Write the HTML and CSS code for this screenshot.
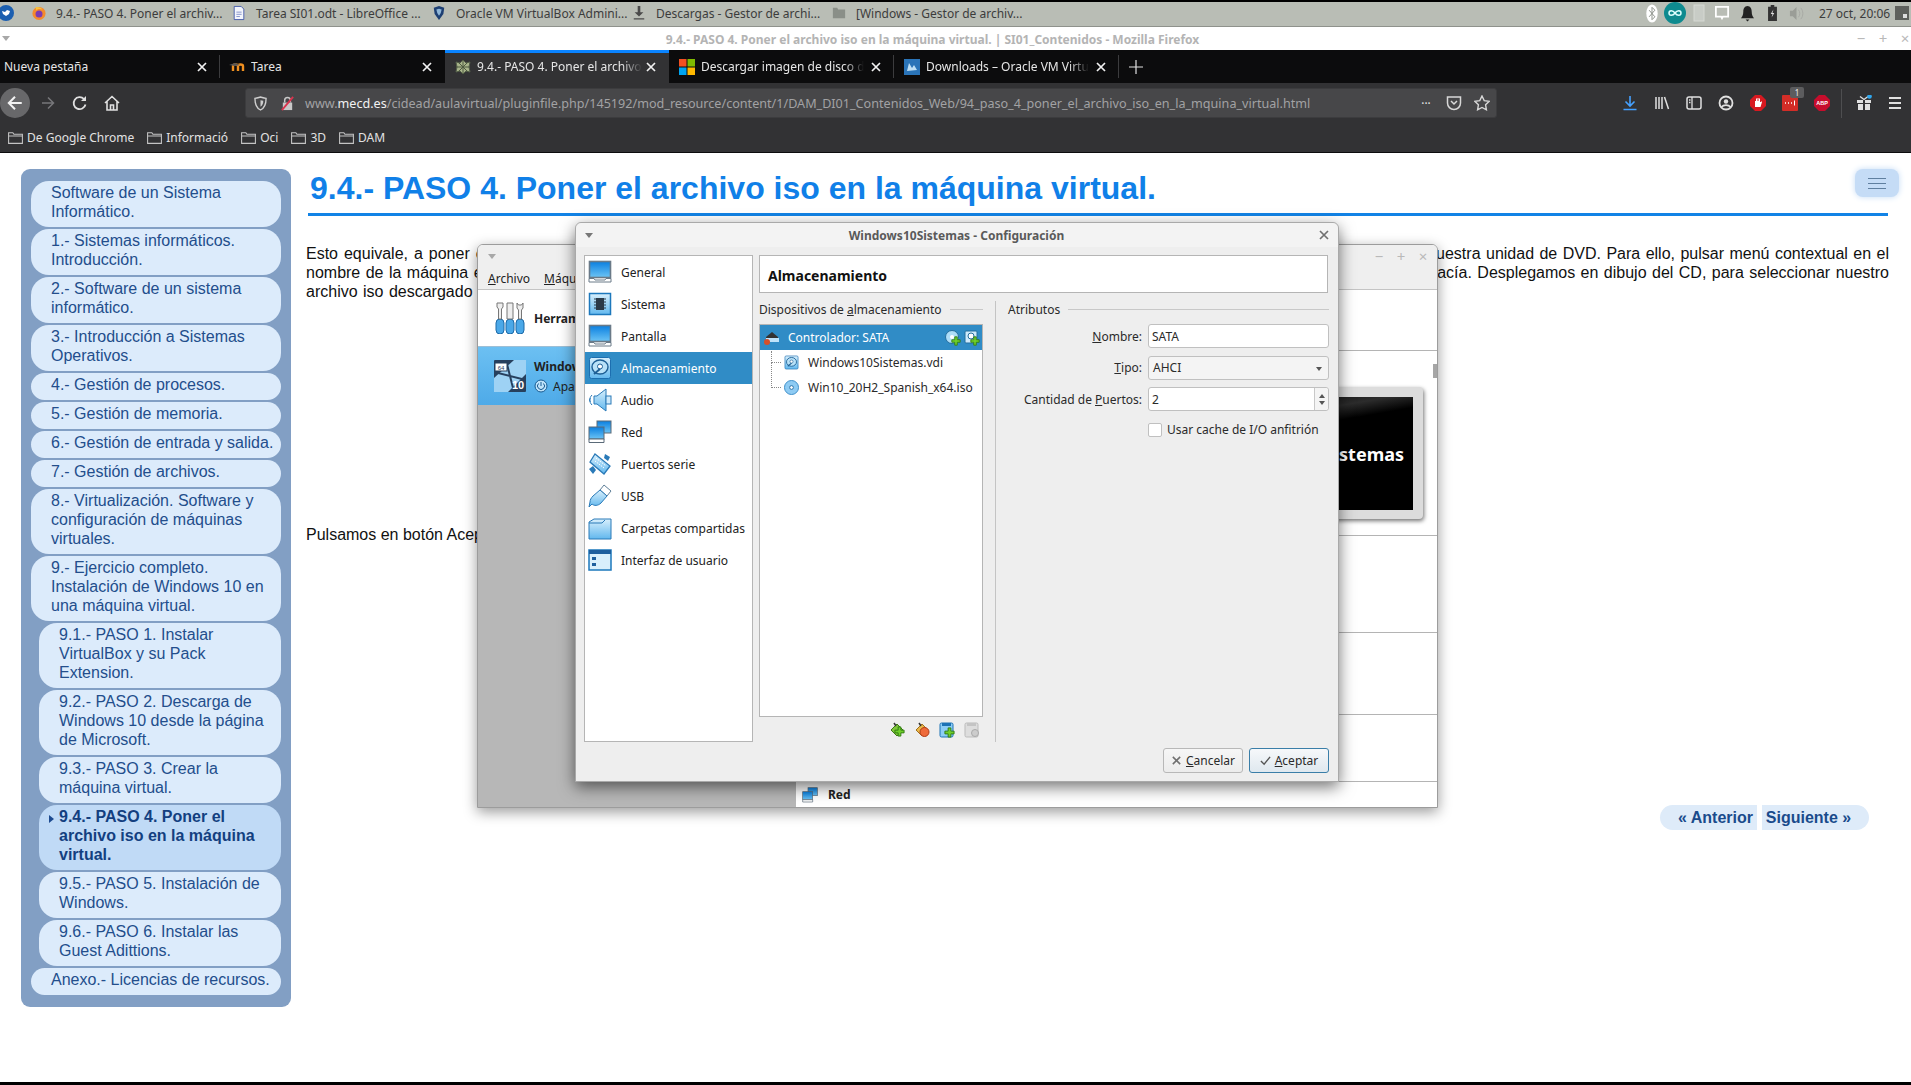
FILE: index.html
```html
<!doctype html>
<html lang="es">
  <head>
    <meta charset="UTF-8" />
    <title>9.4.- PASO 4. Poner el archivo iso en la máquina virtual.</title>
    <link rel="stylesheet" href="styles.css">
  </head>
  <body>
    <svg class="defs" aria-hidden="true">
      <defs>
        <linearGradient id="blue" x1="0" y1="0" x2="0" y2="1">
          <stop offset="0" stop-color="#0a7fe0" />
          <stop offset="1" stop-color="#6cc4f5" />
        </linearGradient>
        <linearGradient id="pale" x1="0" y1="0" x2="0" y2="1">
          <stop offset="0" stop-color="#d8effc" />
          <stop offset="1" stop-color="#62b8ee" />
        </linearGradient>
      </defs>
      <symbol id="folder" viewBox="0 0 16 14">
        <path d="M1.5 2.5h4l1 1.5h8v8.5h-13z M1.5 5.5h13" fill="none" stroke="currentColor" />
      </symbol>
      <symbol id="close" viewBox="0 0 12 12">
        <path d="M2 2l8 8M10 2l-8 8" fill="none" stroke="currentColor" stroke-width="1.7" />
      </symbol>
      <symbol id="screen" viewBox="0 0 24 24">
        <rect x="1.5" y="1.5" width="21" height="16" fill="url(#blue)" stroke="#6a7a88" stroke-width="1.6" />
        <path d="M1 22v-3.500h5l1 1.500h10l1-1.500h5V22z" fill="#fff" stroke="#6a7a88" />
      </symbol>
      <symbol id="plus" viewBox="0 0 12 12">
        <path d="M4.500 1h3v3.500H11v3H7.500V11h-3V7.500H1v-3h3.500z" fill="#6fcf2a" stroke="#2e7a10" />
      </symbol>
      <symbol id="disk" viewBox="0 0 24 24">
        <rect x="1.500" y="1.500" width="21" height="21" rx="2" fill="url(#pale)" stroke="#1d6fb0" />
        <ellipse cx="12" cy="11" rx="8" ry="7" fill="#b9e2f8" stroke="#1d5f95" stroke-width="1.400" />
        <circle cx="12" cy="10.500" r="2.500" fill="#fff" stroke="#1d5f95" />
        <path d="M6 18l6-5" stroke="#1d5f95" stroke-width="2" />
      </symbol>
      <symbol id="net" viewBox="0 0 24 24">
        <rect x="9" y="1" width="14" height="12" fill="url(#blue)" stroke="#5a6a78" />
        <rect x="1" y="7" width="15" height="12" fill="url(#blue)" stroke="#5a6a78" />
        <path d="M1 19h15v3.500H1z" fill="#fff" stroke="#5a6a78" />
      </symbol>
    </svg>

    <header class="panel">
      <svg class="menu-logo" viewBox="0 0 16 16"><circle cx="7" cy="8" r="8" fill="#1c5fb0" /><path d="M3 6l3 1 2-2 3 1-1 3-3 2-3-2z" fill="#fff" /></svg>
      <div class="task">
        <svg class="task-icon" viewBox="0 0 16 16"><circle cx="8" cy="8.500" r="7.500" fill="#f58a2c" /><circle cx="8" cy="9" r="4" fill="#7d3bb0" /><path d="M4 1c2 0 6 0 8 3-3-1-5-1-7 1z" fill="#f7c23c" /></svg>
        <span>9.4.- PASO 4. Poner el archiv...</span>
      </div>
      <div class="task">
        <svg class="task-icon" viewBox="0 0 16 16"><path d="M2.500.5h8l3 3v12h-11z" fill="#f3f5fb" stroke="#3e55a8" /><path d="M5 7h6M5 9.500h6M5 12h4" stroke="#7d8cc8" /></svg>
        <span>Tarea SI01.odt - LibreOffice ...</span>
      </div>
      <div class="task">
        <svg class="task-icon" viewBox="0 0 16 16"><path d="M2 2l6-2 6 2-1 7-5 7-5-7z" fill="#1d3f73" /><path d="M5 4l3-1 3 1-1 4-2 3-2-3z" fill="#8fb6d8" /></svg>
        <span>Oracle VM VirtualBox Admini...</span>
      </div>
      <div class="task">
        <svg class="task-icon" viewBox="0 0 16 16"><path d="M6.500 0h3v7H13l-5 5-5-5h3.500zM2 14h12v1.500H2z" fill="#4a4a4a" /></svg>
        <span>Descargas - Gestor de archi...</span>
      </div>
      <div class="task">
        <svg class="task-icon" viewBox="0 0 16 16"><path d="M1 2h5l1 2h8v10H1z" fill="#8a8f88" /></svg>
        <span>[Windows - Gestor de archiv...</span>
      </div>
      <div class="tray">
        <svg class="tray-bt" viewBox="0 0 12 20"><ellipse cx="6" cy="10" rx="6" ry="9.500" fill="#fff" /><path d="M3 6.500l6 7-3 3v-13l3 3-6 7" fill="none" stroke="#8a8f88" /></svg>
        <svg class="tray-ard" viewBox="0 0 22 22"><circle cx="11" cy="11" r="11" fill="#0e8a8f" /><path d="M11 11c-2-3-6-3-6 0s4 3 6 0c2-3 6-3 6 0s-4 3-6 0z" fill="none" stroke="#dff" stroke-width="1.500" /></svg>
        <svg class="tray-k" viewBox="0 0 12 18"><rect x="1" y="1" width="10" height="16" fill="#c8ccc6" stroke="#d6d9d3" /></svg>
        <svg class="tray-sq" viewBox="0 0 16 16"><path d="M1 1h14v11H9l-1 2-1-2H1z" fill="none" stroke="#fff" stroke-width="2" /></svg>
        <svg class="tray-bell" viewBox="0 0 16 18"><path d="M8 1c3 0 4.500 3 4.500 6s1 5 2.500 7H1c1.500-2 2.500-4 2.500-7S5 1 8 1zM6 15.500h4L8 17.500z" fill="#222" /></svg>
        <svg class="tray-bat" viewBox="0 0 12 18"><path d="M4 0h4v2h3v16H1V2h3z" fill="#333" /><path d="M7 5L4 10h2l-1 4 3-5H6z" fill="#ddd" /></svg>
        <svg class="tray-vol" viewBox="0 0 16 16"><path d="M1 5h3l4-4v14l-4-4H1z" fill="#9a9d97" /><path d="M10 4c2 2 2 6 0 8M12.500 2c3 3 3 9 0 12" fill="none" stroke="#a6a9a3" /></svg>
        <span class="clock">27 oct, 20:06</span>
        <svg class="tray-desk" viewBox="0 0 14 14"><rect width="14" height="14" fill="#5e605c" /><rect x="8" y="8" width="4" height="4" fill="#ddd" /></svg>
      </div>
    </header>

    <div class="titlebar">
      <span class="drop"></span>
      <span class="title">9.4.- PASO 4. Poner el archivo iso en la máquina virtual. | SI01_Contenidos - Mozilla Firefox</span>
      <span class="winbtns"><b>−</b><b>+</b><b>×</b></span>
    </div>

    <nav class="tabs">
      <div class="tab tab-first"><span class="tab-text">Nueva pestaña</span><svg class="tab-x"><use href="#close" /></svg></div>
      <div class="tab tab-two">
        <svg class="tab-icon" viewBox="0 0 16 16"><path d="M1 12V7c0-2 5-2 5 0v5M6 12V7c0-2 5-2 5 0v5" transform="translate(3 0)" fill="none" stroke="#f09020" stroke-width="2.400" /><path d="M0 6l6-2 5 2-5 1z" fill="#555" /></svg>
        <span class="tab-text">Tarea</span><svg class="tab-x"><use href="#close" /></svg>
      </div>
      <div class="tab tab-active">
        <svg class="tab-icon" viewBox="0 0 16 16"><path d="M8 1l3 3 4-1-1 5 1 5-4-1-3 3-3-3-4 1 1-5-1-5 4 1z" fill="#a8b48a" stroke="#55604a" /><path d="M3 3l10 10M13 3L3 13M8 1v14M1 8h14" stroke="#4e5a40" /></svg>
        <span class="tab-text fade">9.4.- PASO 4. Poner el archivo</span><svg class="tab-x"><use href="#close" /></svg>
      </div>
      <div class="tab tab-sep">
        <svg class="tab-icon" viewBox="0 0 16 16"><rect width="7.500" height="7.500" fill="#f25022" /><rect x="8.500" width="7.500" height="7.500" fill="#7fba00" /><rect y="8.500" width="7.500" height="7.500" fill="#00a4ef" /><rect x="8.500" y="8.500" width="7.500" height="7.500" fill="#ffb900" /></svg>
        <span class="tab-text fade">Descargar imagen de disco d</span><svg class="tab-x"><use href="#close" /></svg>
      </div>
      <div class="tab tab-sep">
        <svg class="tab-icon" viewBox="0 0 16 16"><rect width="16" height="16" fill="#2a74b8" /><path d="M3 12l2-8 3 5 2-3 3 5z" fill="#bfe0f5" /></svg>
        <span class="tab-text fade">Downloads – Oracle VM Virtu</span><svg class="tab-x"><use href="#close" /></svg>
      </div>
      <svg class="tab-new" viewBox="0 0 14 14"><path d="M7 0v14M0 7h14" stroke="#e2e2e2" stroke-width="1.200" /></svg>
    </nav>

    <div class="toolbar">
      <span class="back"><svg viewBox="0 0 16 16"><path d="M14 8H2.500M8 2.500L2.500 8 8 13.500" fill="none" stroke="#f2f2f2" stroke-width="1.800" /></svg></span>
      <span class="slot dim"><svg viewBox="0 0 16 16"><path d="M2 8h11.500M8 2.500L13.500 8 8 13.500" fill="none" stroke="currentColor" stroke-width="1.500" /></svg></span>
      <span class="slot"><svg viewBox="0 0 16 16"><path d="M13.500 9.500A6 6 0 1 1 12 4" fill="none" stroke="currentColor" stroke-width="1.800" /><path d="M14 1v5H9z" fill="currentColor" /></svg></span>
      <span class="slot"><svg viewBox="0 0 16 16"><path d="M1 8l7-6.500L15 8M3 6.500V15h10V6.500M6.500 15v-5h3v5" fill="none" stroke="currentColor" stroke-width="1.600" /></svg></span>
      <div class="urlbar">
        <svg class="url-shield" viewBox="0 0 14 16"><path d="M1 2.500C4 2 5 1.500 7 1c2 .5 3 1 6 1.500 0 6-1 10-6 12.500C2 12.500 1 8.500 1 2.500z" fill="none" stroke="#cfcfcf" stroke-width="1.500" /><path d="M7 4.500v7c2.500-1.500 3-4 3-6.500z" fill="#cfcfcf" /></svg>
        <svg class="url-lock" viewBox="0 0 16 16"><path d="M3 7h10v8H3z" fill="#c8c8c8" /><path d="M5 7V4.500a3 3 0 0 1 6 0V7" fill="none" stroke="#c8c8c8" stroke-width="1.600" /><path d="M2 15L14 1" stroke="#d8344e" stroke-width="2" /></svg>
        <span class="url"><span>www.</span><b>mecd.es</b><span>/cidead/aulavirtual/pluginfile.php/145192/mod_resource/content/1/DAM_DI01_Contenidos_Web/94_paso_4_poner_el_archivo_iso_en_la_mquina_virtual.html</span></span>
        <span class="url-dots">•••</span>
        <svg class="url-pocket" viewBox="0 0 16 16"><path d="M1.500 2h13v6a6.500 6.500 0 0 1-13 0z" fill="none" stroke="#d8d8d8" stroke-width="1.500" /><path d="M5 6l3 3 3-3" fill="none" stroke="#d8d8d8" stroke-width="1.500" /></svg>
        <svg class="url-star" viewBox="0 0 16 16"><path d="M8 1l2.200 4.600 5 .7-3.600 3.500.8 5L8 12.500l-4.400 2.300.8-5L.8 6.300l5-.7z" fill="none" stroke="#d8d8d8" stroke-width="1.400" /></svg>
      </div>
      <span class="slot slot-first blue"><svg viewBox="0 0 16 16"><path d="M8 1v10M3.500 6.500L8 11l4.500-4.500M1.500 14.500h13" fill="none" stroke="currentColor" stroke-width="1.600" /></svg></span>
      <span class="slot"><svg viewBox="0 0 16 16"><path d="M2 2v12M5 2v12M8 2v12M10.500 2l4 12" fill="none" stroke="currentColor" stroke-width="1.500" /></svg></span>
      <span class="slot"><svg viewBox="0 0 16 16"><rect x="1" y="2" width="14" height="12" rx="2" fill="none" stroke="currentColor" stroke-width="1.500" /><path d="M6 2v12M3 5h1.500M3 7.500h1.500" stroke="currentColor" stroke-width="1.300" /></svg></span>
      <span class="slot"><svg viewBox="0 0 16 16"><circle cx="8" cy="8" r="6.500" fill="none" stroke="currentColor" stroke-width="1.800" /><circle cx="8" cy="6.500" r="2.200" fill="currentColor" /><path d="M3.500 12c2-2.500 7-2.500 9 0" fill="none" stroke="currentColor" stroke-width="1.800" /></svg></span>
      <span class="slot"><svg viewBox="0 0 16 16"><path d="M5 0h6l5 5v6l-5 5H5l-5-5V5z" fill="#d71920" /><path d="M5 12V6h1V3.500h1V6h.500V3h1v3H9V3.500h1V7h1V6l1 1-1.500 5z" fill="#fff" /></svg></span>
      <span class="slot badge-slot"><svg viewBox="0 0 16 16"><rect width="16" height="16" rx="1" fill="#d32d27" /><path d="M3 8h1M6 8h1M9 8h1" stroke="#fff" stroke-width="1.600" /><path d="M12.500 5.500v5" stroke="#fff" /></svg><span class="badge">1</span></span>
      <span class="slot"><svg viewBox="0 0 16 16"><path d="M5 0h6l5 5v6l-5 5H5l-5-5V5z" fill="#c70d2c" /><text class="abp" x="8" y="10.300" text-anchor="middle">ABP</text></svg></span>
      <span class="tool-sep"></span>
      <span class="slot slot-gift"><svg viewBox="0 0 16 16"><path d="M1 5h6v3H1zM9 5h6v3H9zM2 9h5v6H2zM9 9h5v6H9z" fill="currentColor" /><path d="M4 1.500l4 3 4-3" fill="none" stroke="currentColor" stroke-width="1.300" /><circle cx="13.500" cy="1.500" r="2.300" fill="#2fa8f0" /></svg></span>
      <span class="slot slot-last"><svg viewBox="0 0 16 16"><path d="M2 3h12M2 8h12M2 13h12" stroke="currentColor" stroke-width="1.800" /></svg></span>
    </div>

    <div class="bookmarks">
      <span class="mark"><svg><use href="#folder" /></svg>De Google Chrome</span>
      <span class="mark"><svg><use href="#folder" /></svg>Informació</span>
      <span class="mark"><svg><use href="#folder" /></svg>Oci</span>
      <span class="mark"><svg><use href="#folder" /></svg>3D</span>
      <span class="mark"><svg><use href="#folder" /></svg>DAM</span>
    </div>

    <main class="page">
      <aside class="sidebar">
        <a class="item">Software de un Sistema Informático.</a>
        <a class="item">1.- Sistemas informáticos. Introducción.</a>
        <a class="item">2.- Software de un sistema informático.</a>
        <a class="item">3.- Introducción a Sistemas Operativos.</a>
        <a class="item">4.- Gestión de procesos.</a>
        <a class="item">5.- Gestión de memoria.</a>
        <a class="item">6.- Gestión de entrada y salida.</a>
        <a class="item">7.- Gestión de archivos.</a>
        <a class="item">8.- Virtualización. Software y configuración de máquinas virtuales.</a>
        <a class="item">9.- Ejercicio completo. Instalación de Windows 10 en una máquina virtual.</a>
        <a class="item sub">9.1.- PASO 1. Instalar VirtualBox y su Pack Extension.</a>
        <a class="item sub">9.2.- PASO 2. Descarga de Windows 10 desde la página de Microsoft.</a>
        <a class="item sub">9.3.- PASO 3. Crear la máquina virtual.</a>
        <a class="item sub active">9.4.- PASO 4. Poner el archivo iso en la máquina virtual.</a>
        <a class="item sub">9.5.- PASO 5. Instalación de Windows.</a>
        <a class="item sub">9.6.- PASO 6. Instalar las Guest Adittions.</a>
        <a class="item">Anexo.- Licencias de recursos.</a>
      </aside>

      <article class="content">
        <h1>9.4.- PASO 4. Poner el archivo iso en la máquina virtual.</h1>
        <div class="intro">
          <div class="line line-one"><span>Esto equivale, a poner e</span><span class="tight">uestra unidad de DVD. Para ello, pulsar menú contextual en el</span></div>
          <div class="line line-two"><span>nombre de la máquina e</span><span>vacía. Desplegamos en dibujo del CD, para seleccionar nuestro</span></div>
          <div class="line line-two"><span>archivo iso descargado e</span></div>
        </div>
        <p class="accept">Pulsamos en botón Acep</p>
        <div class="pager">
          <a class="prev">« Anterior</a>
          <a class="next">Siguiente »</a>
        </div>
      </article>

      <button class="hamburger" aria-label="Menú"><span></span><span></span><span></span></button>
    </main>

    <!-- ventana principal de VirtualBox -->
    <section class="vbox">
      <div class="vbox-title">
        <span class="drop"></span>
        <span class="winbtns"><b>−</b><b>+</b><b>×</b></span>
      </div>
      <div class="vbox-menu"><span><u>A</u>rchivo</span><span><u>M</u>áqu</span></div>
      <div class="vbox-body">
        <div class="vm-list">
          <div class="vm-row vm-tools">
            <svg class="vm-icon" viewBox="0 0 32 32">
              <rect x="2" y="17" width="8" height="15" rx="4" fill="#4aa8e8" stroke="#1c6aa8" />
              <rect x="12" y="17" width="8" height="15" rx="4" fill="#4aa8e8" stroke="#1c6aa8" />
              <rect x="22" y="17" width="8" height="15" rx="4" fill="#4aa8e8" stroke="#1c6aa8" />
              <path d="M3 1h6v4l-1.500 2v10h-3V7L3 5zM13 1h6v16h-6z" fill="#eee" stroke="#777" />
              <path d="M23 1v5l1.500 2v9h3V8L29 6V1l-1.500 2h-3z" fill="#eee" stroke="#777" />
            </svg>
            <b>Herram</b>
          </div>
          <div class="vm-row vm-selected">
            <svg class="vm-icon" viewBox="0 0 32 32">
              <rect width="32" height="32" rx="1" fill="#27405e" />
              <path d="M0 18L20 0h12v14L14 32H0z" fill="#9ed2f4" />
              <path d="M12 0l8 32M0 12l32 8" stroke="#27405e" stroke-width="2" />
              <rect x="1" y="3" width="12" height="8" fill="#fff" stroke="#27405e" />
              <text class="os-64" x="7" y="9.800" text-anchor="middle">64</text>
              <text class="os-10" x="24" y="29" text-anchor="middle">10</text>
            </svg>
            <div class="vm-text">
              <b>Window</b>
              <span class="vm-state"><svg viewBox="0 0 14 14"><circle cx="7" cy="7" r="6" fill="#bfe3fa" stroke="#1a5c92" /><path d="M7 3v4M4.500 4.500a3.500 3.500 0 1 0 5 0" fill="none" stroke="#1a5c92" /></svg>Apa</span>
            </div>
          </div>
        </div>
        <div class="vm-detail">
          <div class="detail-row h60"></div>
          <div class="detail-row h185">
            <div class="preview"><div class="preview-screen"><span>stemas</span></div></div>
          </div>
          <div class="detail-row h97"></div>
          <div class="detail-row h82"></div>
          <div class="detail-row h67"></div>
          <div class="detail-last">
            <svg class="red-mini" viewBox="0 0 24 24"><use href="#net" /></svg>
            <b>Red</b>
          </div>
          <span class="thumb"></span>
        </div>
      </div>
    </section>

    <!-- dialogo de configuracion -->
    <section class="dialog">
      <div class="dialog-title">
        <span class="drop"></span>
        <span class="dialog-name">Windows10Sistemas - Configuración</span>
        <svg class="dialog-x"><use href="#close" /></svg>
      </div>
      <div class="dialog-body">
        <ul class="cats">
          <li><svg><use href="#screen" /></svg>General</li>
          <li>
            <svg viewBox="0 0 24 24"><rect x="1.500" y="1.500" width="21" height="21" fill="url(#pale)" stroke="#1d78bc" stroke-width="1.500" /><rect x="8" y="6" width="8" height="12" fill="#2b3a48" /><path d="M6 7h2M6 10h2M6 13h2M6 16h2M16 7h2M16 10h2M16 13h2M16 16h2" stroke="#2b3a48" /></svg>
            Sistema
          </li>
          <li><svg><use href="#screen" /></svg>Pantalla</li>
          <li class="on"><svg><use href="#disk" /></svg>Almacenamiento</li>
          <li>
            <svg viewBox="0 0 24 24"><path d="M6 8h3l9-7v22l-9-7H6z" fill="url(#pale)" stroke="#2a7ab8" /><rect x="18" y="8" width="5" height="8" fill="#cfeafb" stroke="#2a7ab8" /><path d="M4 7c-3 3-3 7 0 10M2.500 10c-1 1-1 3 0 4" fill="none" stroke="#2a7ab8" /></svg>
            Audio
          </li>
          <li><svg viewBox="0 0 24 24"><use href="#net" /></svg>Red</li>
          <li>
            <svg viewBox="0 0 24 24"><path d="M7 2L22 14l-6 8L2 10z" fill="url(#pale)" stroke="#2a7ab8" stroke-width="1.300" /><path d="M8 6l10 8M7 9l9 7" stroke="#fff" stroke-dasharray="1.500 1" /><path d="M1 17l4-3 3 4-3 4zM17 2l5 3-2 4-4-3z" fill="#2a7ab8" /></svg>
            Puertos serie
          </li>
          <li>
            <svg viewBox="0 0 24 24"><path d="M16 1l7 6-4 5-7-6z" fill="#fff" stroke="#5f7f98" /><path d="M12 6l7 6-6 7c-3 3-7 3-9 1L1 23l1-5c0-2 1-4 3-6z" fill="url(#pale)" stroke="#2a7ab8" /></svg>
            USB
          </li>
          <li>
            <svg viewBox="0 0 24 24"><path d="M1 6l5-3h17v20H1z" fill="url(#pale)" stroke="#2a7ab8" /><path d="M1 7h13l3-3" fill="none" stroke="#2a7ab8" /></svg>
            Carpetas compartidas
          </li>
          <li>
            <svg viewBox="0 0 24 24"><rect x="1" y="2" width="22" height="20" fill="#d8effc" stroke="#1d78bc" stroke-width="1.500" /><rect x="1" y="2" width="22" height="4" fill="#1d5f9e" /><path d="M4 9h4v3H4zM4 15h4v3H4z" fill="#1d5f9e" /></svg>
            Interfaz de usuario
          </li>
        </ul>
        <div class="settings">
          <div class="settings-head">Almacenamiento</div>
          <div class="settings-panes">
            <div class="storage">
              <div class="legend"><span>Dispositivos de <u>a</u>lmacenamiento</span><i></i></div>
              <div class="tree">
                <div class="tree-row tree-ctrl">
                  <svg class="tree-icon" viewBox="0 0 16 16"><path d="M8 2l6 5v2H2V7z" fill="#333" /><rect x="2" y="8" width="13" height="4" fill="#bfe3fa" /><circle cx="3" cy="12" r="3" fill="#d5502a" /></svg>
                  <span class="tree-name">Controlador: SATA</span>
                  <svg class="add-one" viewBox="0 0 16 16"><circle cx="7" cy="7" r="6.500" fill="#aeddf7" stroke="#256e9e" /><circle cx="7" cy="7" r="2" fill="#fff" /><use href="#plus" x="6" y="6" width="10" height="10" /></svg>
                  <svg class="add-two" viewBox="0 0 16 16"><rect x="1" y="1" width="12" height="12" rx="1" fill="#cfeafb" stroke="#256e9e" /><circle cx="7" cy="6" r="3" fill="#fff" stroke="#256e9e" /><use href="#plus" x="6" y="6" width="10" height="10" /></svg>
                </div>
                <div class="tree-row tree-child">
                  <span class="dots dots-one"></span>
                  <svg class="tree-icon" viewBox="0 0 24 24"><use href="#disk" /></svg>
                  <span>Windows10Sistemas.vdi</span>
                </div>
                <div class="tree-row tree-child">
                  <span class="dots dots-two"></span>
                  <svg class="tree-icon" viewBox="0 0 16 16"><circle cx="8" cy="8" r="7.500" fill="#8ecbf3" stroke="#3a8cc8" /><circle cx="8" cy="8" r="2" fill="#fff" stroke="#2a70a5" /></svg>
                  <span>Win10_20H2_Spanish_x64.iso</span>
                </div>
              </div>
              <div class="tree-tools">
                <svg viewBox="0 0 16 16"><path d="M8 2l6 6-6 6-6-6z" fill="#7fc63a" stroke="#3f7a18" /><path d="M5 1l2 3" stroke="#333" stroke-width="1.500" /><use href="#plus" x="5" y="4" width="11" height="11" /></svg>
                <svg viewBox="0 0 16 16"><path d="M8 2l6 6-6 6-6-6z" fill="#e8b84a" stroke="#a0701c" /><path d="M5 1l2 3" stroke="#333" stroke-width="1.500" /><circle cx="10.500" cy="10" r="4.500" fill="#ee6a3a" stroke="#b03a16" /></svg>
                <svg viewBox="0 0 16 16"><rect x="1" y="1" width="13" height="14" rx="1.500" fill="#8ccdf5" stroke="#1d72b5" /><rect x="3" y="1" width="9" height="3" fill="#1d72b5" /><use href="#plus" x="5" y="5" width="11" height="11" /></svg>
                <svg viewBox="0 0 16 16"><rect x="1" y="1" width="13" height="14" rx="1.500" fill="#ddd" stroke="#bbb" /><rect x="3" y="1" width="9" height="3" fill="#c4c4c4" /><circle cx="11" cy="11" r="3.500" fill="#ccc" stroke="#aaa" /></svg>
              </div>
            </div>
            <div class="attrs">
              <div class="legend"><span>Atributos</span><i></i></div>
              <div class="attr-grid">
                <label><u>N</u>ombre:</label>
                <div class="field">SATA</div>
                <label><u>T</u>ipo:</label>
                <div class="field select">AHCI<span class="caret"></span></div>
                <label>Cantidad de <u>P</u>uertos:</label>
                <div class="field spin">2<span class="spinner"><i></i><i></i></span></div>
                <span></span>
                <div class="check"><span class="box"></span>Usar cache de I/O anfitrión</div>
              </div>
            </div>
          </div>
        </div>
      </div>
      <div class="dialog-foot">
        <button class="btn"><svg><use href="#close" /></svg><span><u>C</u>ancelar</span></button>
        <button class="btn btn-ok"><svg viewBox="0 0 12 12"><path d="M1 6.500L4.500 10 11 2" fill="none" stroke="#555" stroke-width="1.500" /></svg><span><u>A</u>ceptar</span></button>
      </div>
    </section>
  </body>
</html>
```

FILE: styles.css
```css
* {
  box-sizing: border-box;
}
html,
body {
  margin: 0;
  height: 100%;
}
body {
  background: #000;
  font-family: "Noto Sans", sans-serif;
  display: flex;
  flex-direction: column;
  padding-top: 2px;
  padding-bottom: 3px;
  overflow: hidden;
  position: relative;
}
.defs {
  position: absolute;
  width: 0;
  height: 0;
}
svg {
  display: block;
  flex: none;
}

/* panel del escritorio */
.panel {
  height: 25px;
  padding-bottom: 2px;
  background: #b9bdb5;
  border-bottom: 1px solid #8f928c;
  display: flex;
  align-items: center;
  font-size: 12px;
  color: #3c3c3c;
}
.menu-logo {
  width: 16px;
  height: 16px;
  margin-left: -1px;
  margin-right: 17px;
}
.task {
  width: 200px;
  display: flex;
  align-items: center;
  gap: 10px;
  white-space: nowrap;
}
.task-icon {
  width: 14px;
  height: 16px;
}
.tray {
  margin-left: auto;
  width: 265px;
  display: flex;
  align-items: center;
  padding-right: 2px;
}
.tray-bt {
  width: 12px;
  height: 19px;
}
.tray-ard {
  width: 22px;
  height: 22px;
  margin-left: 6px;
}
.tray-k {
  width: 12px;
  height: 18px;
  margin-left: 7px;
}
.tray-sq {
  width: 14px;
  height: 14px;
  margin-left: 10px;
}
.tray-bell {
  width: 15px;
  height: 17px;
  margin-left: 11px;
}
.tray-bat {
  width: 11px;
  height: 16px;
  margin-left: 12px;
}
.tray-vol {
  width: 15px;
  height: 15px;
  margin-left: 11px;
}
.clock {
  margin-left: 15px;
  white-space: nowrap;
}
.tray-desk {
  width: 14px;
  height: 14px;
  margin-left: auto;
}

/* barra de titulo */
.titlebar {
  height: 23px;
  background: #fff;
  display: flex;
  align-items: center;
}
.drop {
  width: 0;
  height: 0;
  border: 4px solid transparent;
  border-top: 5px solid #a8a8a8;
  border-bottom: 0;
}
.titlebar .drop {
  margin-left: 2px;
}
.title {
  flex: 1;
  padding: 2px 0 0 5px;
  text-align: center;
  font-size: 12px;
  font-weight: 700;
  color: #b4b4b4;
  white-space: nowrap;
}
.winbtns {
  display: flex;
  width: 66px;
  color: #b9b9b9;
  font-size: 15px;
}
.titlebar .winbtns {
  margin-right: -5px;
}
.winbtns b {
  width: 22px;
  text-align: center;
  font-weight: 400;
  line-height: 1;
}

/* pestañas */
.tabs {
  height: 33px;
  background: #0c0c0d;
  display: flex;
  align-items: center;
  color: #e6e6e6;
  font-size: 12px;
}
.tab {
  height: 33px;
  display: flex;
  align-items: center;
  width: 225px;
  padding-left: 9px;
  padding-right: 12px;
  position: relative;
}
.tab-first {
  width: 220px;
  padding-left: 4px;
}
.tab-sep {
  padding-left: 10px;
}
.tab-first::after,
.tab-sep::after {
  content: "";
  position: absolute;
  right: 0;
  top: 5px;
  bottom: 5px;
  width: 1px;
  background: #3c3c3e;
}
.tab-active {
  width: 224px;
  padding-left: 10px;
  padding-bottom: 3px;
  background: #323234;
  border-top: 3px solid #0a84ff;
}
.tab-icon {
  width: 16px;
  height: 16px;
  margin-right: 6px;
}
.tab-text {
  flex: 1;
  min-width: 0;
  overflow: hidden;
  white-space: nowrap;
}
.fade {
  -webkit-mask-image: linear-gradient(to right, #000 88%, transparent);
  mask-image: linear-gradient(to right, #000 88%, transparent);
}
.tab-x {
  width: 12px;
  height: 12px;
  margin-left: 6px;
  color: #f2f2f2;
}
.tab-active .tab-x {
  margin-left: 3px;
}
.tab-new {
  width: 14px;
  height: 14px;
  margin-left: 10px;
}

/* barra de navegacion */
.toolbar {
  height: 37px;
  padding-top: 3px;
  background: #323234;
  display: flex;
  align-items: center;
  color: #e0e0e0;
}
.back {
  width: 30px;
  height: 30px;
  margin-right: 2px;
  border-radius: 50%;
  background: #68686a;
  display: flex;
  align-items: center;
  justify-content: center;
  flex: none;
}
.back svg {
  width: 18px;
  height: 18px;
}
.slot {
  width: 32px;
  height: 30px;
  display: flex;
  align-items: center;
  justify-content: center;
  position: relative;
  flex: none;
}
.slot svg {
  width: 16px;
  height: 16px;
}
.slot-last {
  width: 30px;
}
.dim {
  color: #77777a;
}
.blue {
  color: #45a1ff;
}
.urlbar {
  margin-left: 117px;
  width: 1252px;
  height: 30px;
  flex: none;
  background: #474749;
  border: 1px solid #3c3c3e;
  border-radius: 3px;
  display: flex;
  align-items: center;
  font-size: 12.6px;
  white-space: nowrap;
}
.url-shield {
  width: 13px;
  height: 15px;
  margin-left: 8px;
}
.url-lock {
  width: 15px;
  height: 15px;
  margin-left: 13px;
}
.url {
  margin-left: 10px;
  color: #a2a2a4;
  flex: 1;
}
.url b {
  font-weight: 400;
  color: #f2f2f2;
}
.url-dots {
  color: #d8d8d8;
  font-size: 7px;
  letter-spacing: 0.5px;
  margin-right: 15px;
}
.url-pocket {
  width: 16px;
  height: 16px;
  margin-right: 12px;
}
.url-star {
  width: 16px;
  height: 16px;
  margin-right: 6px;
}
.slot-first {
  margin-left: 117px;
}
.badge {
  position: absolute;
  top: -1px;
  right: 2px;
  width: 14px;
  height: 11px;
  border-radius: 2px;
  background: #5c5c5e;
  color: #eee;
  font-size: 8px;
  line-height: 11px;
  text-align: center;
}
.abp {
  fill: #fff;
  font-size: 5.5px;
  font-weight: 700;
  font-family: "Liberation Sans", sans-serif;
}
.tool-sep {
  width: 1px;
  height: 29px;
  margin-left: 3px;
  background: #4e4e50;
  flex: none;
}
.slot-gift {
  margin-left: 6px;
}

/* marcadores */
.bookmarks {
  height: 33px;
  padding: 3px 0 0 7px;
  background: #323234;
  border-bottom: 1px solid #0c0c0d;
  display: flex;
  align-items: center;
  gap: 12px;
  color: #e2e2e2;
  font-size: 12px;
  flex: none;
}
.mark {
  display: flex;
  align-items: center;
  gap: 3px;
  white-space: nowrap;
}
.mark svg {
  width: 17px;
  height: 15px;
  color: #c4c4c4;
}

/* pagina */
.page {
  flex: 1;
  min-height: 0;
  background: #fff;
  display: flex;
  align-items: flex-start;
  padding: 16px 0 0 21px;
  position: relative;
  font-family: "Liberation Sans", Arial, sans-serif;
  font-size: 16px;
  line-height: 19px;
  color: #111;
}
.sidebar {
  width: 270px;
  flex: none;
  background: #829fc4;
  border-radius: 9px;
  padding: 12px 10px;
  display: flex;
  flex-direction: column;
  gap: 2px;
}
.item {
  position: relative;
  display: block;
  padding: 2px 4px 6px 20px;
  background: #dcebfb;
  border-radius: 18px;
  color: #234e8c;
}
.sub {
  margin-left: 8px;
  padding-right: 8px;
}
.active {
  background: #c0daf6;
  color: #133f80;
  font-weight: 700;
}
.active::before {
  content: "";
  position: absolute;
  left: 10px;
  top: 10px;
  border: 4.5px solid transparent;
  border-left: 5px solid #1c4a90;
  border-right: 0;
}
.content {
  width: 1583px;
  margin: 1px 0 0 15px;
}
h1 {
  margin: 0 1px 28px 2px;
  padding: 0 0 6px 2px;
  border-bottom: 3px solid #1283e6;
  font-size: 32px;
  line-height: 37px;
  font-weight: 700;
  color: #1080e8;
  white-space: nowrap;
}
p {
  margin: 0;
}
.line {
  display: flex;
  justify-content: space-between;
  white-space: nowrap;
}
.line-one {
  word-spacing: 1.5px;
}
.line-two {
  word-spacing: 1px;
}
.line .tight {
  word-spacing: 1px;
}
.accept {
  margin-top: 224px;
}
.pager {
  margin-top: 261px;
  margin-right: 20px;
  display: flex;
  justify-content: flex-end;
  gap: 5px;
  font-weight: 700;
  color: #1a4b8c;
}
.prev,
.next {
  height: 25px;
  padding-top: 3px;
  background: #deebf9;
  text-align: center;
}
.prev {
  width: 97px;
  border-radius: 13px 0 0 13px;
  padding-left: 14px;
}
.next {
  width: 107px;
  border-radius: 0 13px 13px 0;
  padding-right: 14px;
}
.hamburger {
  position: absolute;
  top: 16px;
  right: 12px;
  width: 44px;
  height: 28px;
  border: 0;
  border-radius: 8px;
  background: #c5dcf6;
  box-shadow: 0 0 6px #c5dcf6;
  display: flex;
  flex-direction: column;
  justify-content: center;
  align-items: center;
  gap: 4px;
  padding: 0;
}
.hamburger span {
  width: 18px;
  height: 1px;
  background: #5f7f9f;
}

/* ventanas de virtualbox */
.vbox {
  position: absolute;
  left: 477px;
  top: 244px;
  width: 961px;
  height: 564px;
  border: 1px solid #9c9c9c;
  border-radius: 6px 6px 0 0;
  background: #fff;
  box-shadow: 0 4px 14px rgba(0, 0, 0, 0.4);
  display: flex;
  flex-direction: column;
  overflow: hidden;
  font-size: 12px;
  color: #222;
}
.vbox-title {
  height: 23px;
  flex: none;
  background: #efefef;
  display: flex;
  align-items: center;
  justify-content: space-between;
  padding-left: 10px;
}
.vbox-title .winbtns {
  margin-right: 3px;
}
.vbox-menu {
  height: 22px;
  flex: none;
  background: #efefef;
  border-bottom: 1px solid #c4c4c4;
  display: flex;
  align-items: center;
  gap: 14px;
  padding-left: 10px;
}
.vbox-body {
  flex: 1;
  display: flex;
  min-height: 0;
}
.vm-list {
  width: 318px;
  flex: none;
  background: #b7b7b7;
}
.vm-row {
  display: flex;
  align-items: center;
  padding-left: 16px;
  gap: 8px;
  background: #fff;
}
.vm-tools {
  height: 57px;
  border-bottom: 1px solid #9dbfd6;
}
.vm-selected {
  height: 58px;
  background: linear-gradient(#6cc0f2, #4eaae8);
}
.vm-icon {
  width: 32px;
  height: 32px;
}
.os-64 {
  font-size: 6px;
  font-family: "Liberation Sans", sans-serif;
  fill: #27405e;
}
.os-10 {
  font-size: 11px;
  font-weight: 700;
  font-family: "Liberation Sans", sans-serif;
  fill: #fff;
}
.vm-text {
  display: flex;
  flex-direction: column;
  gap: 3px;
}
.vm-state {
  display: flex;
  align-items: center;
  gap: 5px;
}
.vm-state svg {
  width: 14px;
  height: 14px;
}
.vm-detail {
  flex: 1;
  position: relative;
  display: flex;
  flex-direction: column;
}
.detail-row {
  border-bottom: 1px solid #b4b4b4;
  flex: none;
}
.h60 {
  height: 61px;
}
.h185 {
  height: 185px;
  padding: 36px 14px 0 0;
}
.h97 {
  height: 97px;
}
.h82 {
  height: 82px;
}
.h67 {
  height: 67px;
}
.detail-last {
  flex: 1;
  display: flex;
  align-items: center;
  gap: 10px;
  padding-left: 6px;
}
.detail-last b {
  font-size: 12px;
}
.red-mini {
  width: 16px;
  height: 16px;
}
.thumb {
  position: absolute;
  right: 0;
  top: 74px;
  width: 4px;
  height: 14px;
  background: #a6a6a6;
}
.preview {
  width: 210px;
  height: 132px;
  margin-left: auto;
  padding: 10px;
  background: #dcdcdc;
  border-radius: 4px;
  box-shadow: 1px 2px 4px rgba(0, 0, 0, 0.55);
}
.preview-screen {
  height: 113px;
  background: linear-gradient(170deg, #000 0, #2c2c2c 20%, #000 30%);
  display: flex;
  align-items: center;
  justify-content: flex-end;
  padding-right: 9px;
  color: #fff;
  font-family: "Noto Sans", sans-serif;
  font-size: 18px;
  font-weight: 700;
  white-space: nowrap;
}
.dialog {
  position: absolute;
  left: 575px;
  top: 222px;
  width: 764px;
  height: 560px;
  background: #eee;
  border: 1px solid #a9a9a9;
  border-radius: 6px 6px 0 0;
  box-shadow: 0 5px 16px rgba(0, 0, 0, 0.55);
  display: flex;
  flex-direction: column;
  font-size: 12px;
  color: #2a2a2a;
}
.dialog-title {
  height: 24px;
  flex: none;
  display: flex;
  align-items: center;
  justify-content: space-between;
  padding: 0 8px 0 9px;
  background: #f3f3f3;
  border-radius: 6px 6px 0 0;
}
.dialog-title .drop {
  border-top-color: #777;
}
.dialog-name {
  font-size: 12px;
  font-weight: 700;
  color: #5a5a5a;
  margin-right: -2px;
}
.dialog-x {
  width: 12px;
  height: 12px;
  color: #707070;
}
.dialog-body {
  height: 487px;
  margin-top: 8px;
  flex: none;
  display: flex;
  padding-left: 8px;
  gap: 6px;
}
.cats {
  width: 169px;
  flex: none;
  margin: 0;
  padding: 0;
  list-style: none;
  background: #fff;
  border: 1px solid #b5b5b5;
}
.cats li {
  height: 32px;
  display: flex;
  align-items: center;
  gap: 9px;
  padding-left: 3px;
  color: #222;
}
.cats svg {
  width: 24px;
  height: 24px;
}
.cats .on {
  background: #308cc6;
  color: #fff;
}
.settings {
  width: 569px;
  display: flex;
  flex-direction: column;
}
.settings-head {
  height: 38px;
  flex: none;
  background: #fff;
  border: 1px solid #b5b5b5;
  padding-left: 8px;
  line-height: 40px;
  font-size: 14px;
  font-weight: 700;
  color: #111;
}
.settings-panes {
  flex: 1;
  display: flex;
  margin-top: 8px;
  min-height: 0;
}
.storage {
  width: 224px;
  flex: none;
  display: flex;
  flex-direction: column;
}
.legend {
  height: 16px;
  flex: none;
  display: flex;
  align-items: center;
  gap: 8px;
  white-space: nowrap;
}
.legend i {
  flex: 1;
  height: 1px;
  background: #c8c8c8;
}
.tree {
  height: 393px;
  margin-top: 7px;
  flex: none;
  background: #fff;
  border: 1px solid #b5b5b5;
}
.tree-row {
  position: relative;
  height: 25px;
  display: flex;
  align-items: center;
  white-space: nowrap;
}
.tree-ctrl {
  background: #308cc6;
  color: #fff;
  padding-left: 4px;
}
.tree-name {
  margin-left: 8px;
}
.tree-ctrl .tree-icon {
  width: 16px;
  height: 16px;
}
.add-one,
.add-two {
  width: 16px;
  height: 16px;
  position: absolute;
  right: 21px;
}
.add-two {
  right: 2px;
}
.tree-child {
  padding-left: 24px;
  gap: 9px;
}
.tree-child .tree-icon {
  width: 15px;
  height: 15px;
}
.dots {
  position: absolute;
  left: 11px;
  bottom: 50%;
  width: 10px;
  border-left: 1px dotted #888;
  border-bottom: 1px dotted #888;
}
.dots-one {
  height: 12px;
}
.dots-two {
  height: 25px;
}
.tree-tools {
  flex: 1;
  display: flex;
  justify-content: flex-end;
  align-items: center;
  gap: 9px;
  padding-right: 3px;
}
.tree-tools svg {
  width: 16px;
  height: 16px;
}
.attrs {
  flex: 1;
  margin-left: 12px;
  padding-left: 12px;
  border-left: 1px solid #c4c4c4;
}
.attr-grid {
  margin-top: 7px;
  display: grid;
  grid-template-columns: 134px 181px;
  column-gap: 6px;
  row-gap: 7.5px;
  grid-auto-rows: 24px;
  align-items: center;
}
.attr-grid label {
  text-align: right;
  white-space: nowrap;
}
.field {
  height: 24px;
  background: #fff;
  border: 1px solid #c0c0c0;
  border-radius: 3px;
  display: flex;
  align-items: center;
  padding-left: 3px;
  position: relative;
}
.select {
  background: #f4f4f4;
  padding-left: 4px;
}
.caret {
  position: absolute;
  right: 6px;
  top: 10px;
  border: 3.5px solid transparent;
  border-top: 4px solid #555;
  border-bottom: 0;
}
.spinner {
  position: absolute;
  right: 0;
  top: 0;
  bottom: 0;
  width: 14px;
  background: #f4f4f4;
  border-left: 1px solid #c8c8c8;
  border-radius: 0 3px 3px 0;
  display: flex;
  flex-direction: column;
  align-items: center;
  justify-content: center;
  gap: 3px;
}
.spinner i {
  border: 3.5px solid transparent;
  border-bottom: 4px solid #555;
  border-top: 0;
}
.spinner i + i {
  border-top: 4px solid #555;
  border-bottom: 0;
}
.check {
  display: flex;
  align-items: center;
  gap: 5px;
  white-space: nowrap;
  margin-top: -2px;
}
.box {
  width: 14px;
  height: 14px;
  background: #fff;
  border: 1px solid #c0c0c0;
  border-radius: 2px;
}
.dialog-foot {
  flex: 1;
  display: flex;
  justify-content: flex-end;
  gap: 6px;
  padding: 6px 9px 0 0;
}
.btn {
  width: 80px;
  height: 25px;
  padding: 0;
  background: linear-gradient(#f6f6f6, #ececec);
  border: 1px solid #b8b8b8;
  border-radius: 3px;
  display: flex;
  align-items: center;
  justify-content: center;
  gap: 4px;
  font: inherit;
  color: #2a2a2a;
}
.btn svg {
  width: 11px;
  height: 11px;
  color: #707070;
}
.btn-ok {
  border-color: #3a7ea8;
  background: linear-gradient(#f6f8fa, #dfe8ef);
}
```
